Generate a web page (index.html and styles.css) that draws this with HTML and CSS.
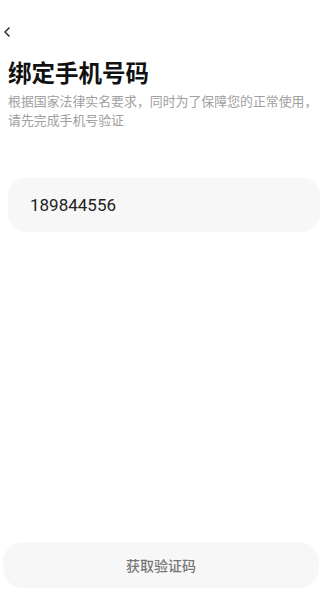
FILE: index.html
```html
<!DOCTYPE html>
<html lang="zh-CN">
<head>
    <meta charset="UTF-8">
    <meta name="viewport" content="width=device-width, initial-scale=1.0">
    <title>绑定手机号码</title>
    <link rel="stylesheet" href="styles.css">
</head>
<body>
    <div class="bind-page">
        <div class="top-bar">
            <svg class="back-icon" width="8" height="12" viewBox="0 0 8 12">
                <path d="M6.5 1.5 L2 6 L6.5 10.5" fill="none" stroke="#222" stroke-width="1.4"/>
            </svg>
        </div>
        <h1 class="bind-title">绑定手机号码</h1>
        <p class="bind-desc">根据国家法律实名要求，同时为了保障您的正常使用，请先完成手机号验证</p>
        <div class="phone-box">
            <input type="tel" class="phone-input" value="189844556">
        </div>
        <button class="code-btn">获取验证码</button>
    </div>
</body>
</html>
```

FILE: styles.css
```css
body {
    margin: 0;
    background-color: #fff;
    font-family: "Noto Sans CJK SC", Roboto, sans-serif;
}
.bind-page {
    height: 594px;
    display: flex;
    flex-direction: column;
    box-sizing: border-box;
    padding-bottom: 6px;
    overflow: hidden;
}
.top-bar {
    height: 44px;
    padding-left: 3px;
    padding-top: 26px;
    box-sizing: border-box;
}
.back-icon {
    display: block;
}
.bind-title {
    margin: 12px 0 0 8px;
    font-size: 23.5px;
    line-height: 32px;
    font-weight: bold;
    color: #111;
}
.bind-desc {
    margin: 3px 0 0 8px;
    font-size: 12.9px;
    line-height: 19px;
    color: #a0a0a0;
}
.phone-box {
    margin: 49px 0 0 8px;
    height: 54px;
    background-color: #f7f7f7;
    border-radius: 17px;
    display: flex;
    align-items: center;
    padding-left: 22px;
}
.phone-input {
    border: none;
    outline: none;
    background: transparent;
    font-family: Roboto, sans-serif;
    font-size: 17px;
    color: #222;
    padding: 0;
    width: 200px;
}
.code-btn {
    margin: auto 1px 0 3px;
    height: 46px;
    border: none;
    border-radius: 20px;
    background-color: #f7f7f7;
    color: #777;
    font-family: "Noto Sans CJK SC", sans-serif;
    font-size: 14px;
    font-weight: 500;
    cursor: pointer;
}
```
